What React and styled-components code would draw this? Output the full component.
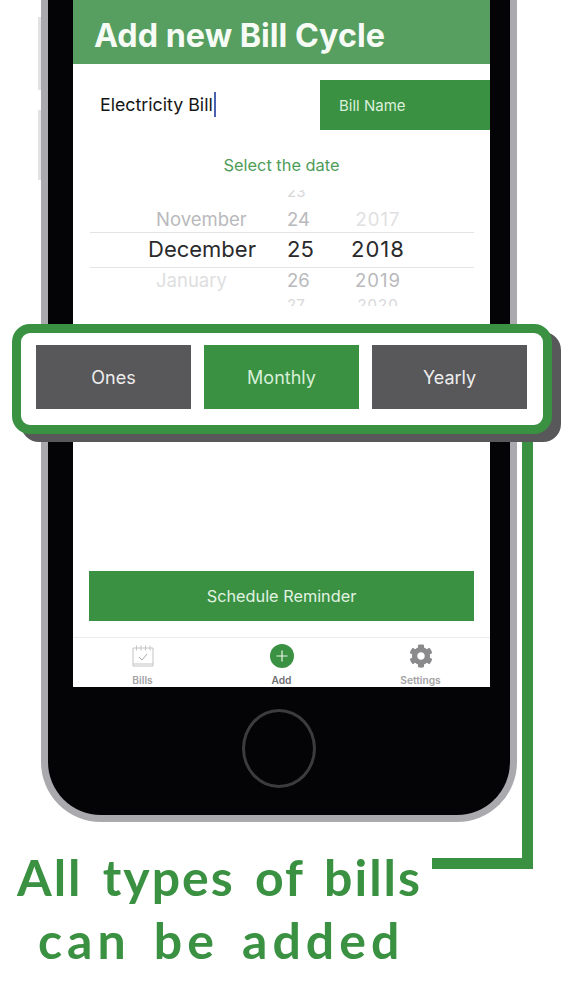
import React from "react";
import styled, { createGlobalStyle } from "styled-components";
import { FaCog } from "react-icons/fa";

const GREEN = "#3a9142";
const GlobalStyle = createGlobalStyle`
  html, body { margin: 0; padding: 0; background: #fff; }
  body { font-family: Inter, "Liberation Sans", sans-serif; }
`;

const Page = styled.div`
  position: relative;
  width: 563px;
  height: 1000px;
  overflow: hidden;
  background: #fff;
`;

const Phone = styled.div`
  position: relative;
  box-sizing: border-box;
  width: 476px;
  margin-left: 41px;
  padding: 0 20px 27px 25px;
  background: #040406;
  border: 7px solid #a9a9ae;
  border-top: 0;
  border-radius: 0 0 60px 60px;
`;

const SideKey = styled.span`
  position: absolute;
  left: -10px;
  top: ${(p) => p.$top}px;
  width: 3px;
  height: ${(p) => p.$h}px;
  background: #e2e2e5;
`;

const Screen = styled.div`
  display: flex;
  flex-direction: column;
  height: 687px;
  background: #fff;
  overflow: hidden;
`;

const Header = styled.div`
  flex: none;
  box-sizing: border-box;
  height: 64px;
  padding: 17px 0 0 21px;
  background: #579f60;
  color: #f6fbf5;
  font-size: 32.3px;
  line-height: 38px;
  font-weight: 700;
`;

const NameRow = styled.div`
  display: flex;
  align-items: stretch;
  height: 50px;
  margin-top: 16px;
`;

const NameInput = styled.div`
  flex: 1;
  display: flex;
  align-items: center;
  padding: 0 0 2px 27px;
  color: #151515;
  font-size: 17.8px;
`;

const Caret = styled.span`
  width: 2px;
  height: 25px;
  margin-left: 1px;
  background: #4a62b0;
`;

const NameLabel = styled.div`
  box-sizing: border-box;
  width: 170px;
  padding-left: 19px;
  display: flex;
  align-items: center;
  background: ${GREEN};
  color: #dcf0dc;
  font-size: 15px;
`;

const DateTitle = styled.div`
  margin-top: 25px;
  text-align: center;
  color: #4f9c5a;
  font-size: 16.4px;
  line-height: 20px;
`;

const Picker = styled.div`
  margin: 15px 16px 0 17px;
  display: flex;
  flex-direction: column;
`;

const PickerRow = styled.div`
  box-sizing: border-box;
  display: grid;
  grid-template-columns: 190px 60px 76px 59px;
  align-items: start;
  height: ${(p) => p.$h}px;
  overflow: hidden;
  color: ${(p) => p.$color};
  font-size: ${(p) => p.$size}px;
  line-height: ${(p) => p.$lh}px;
  ${(p) => p.$active && "border-top: 1.5px solid #e4e4e6; border-bottom: 1.5px solid #e4e4e6;"}
`;

const MonthCell = styled.span`
  padding-left: ${(p) => p.$indent}px;
  color: ${(p) => p.$color || "inherit"};
`;

const DayCell = styled.span`
  padding-left: 7px;
`;

const YearCell = styled.span`
  text-align: center;
  letter-spacing: 1px;
  color: ${(p) => p.$color || "inherit"};
`;

const ScheduleButton = styled.div`
  flex: none;
  margin: auto 16px 0 16px;
  height: 50px;
  display: flex;
  align-items: center;
  justify-content: center;
  background: ${GREEN};
  color: #e2f3e2;
  font-size: 16.3px;
`;

const TabBar = styled.div`
  flex: none;
  margin-top: 16px;
  height: 49px;
  border-top: 1px solid #ececec;
  display: grid;
  grid-template-columns: 139px 139px 139px;
`;

const Tab = styled.div`
  display: flex;
  flex-direction: column;
  align-items: center;
  padding-top: 6px;
  color: ${(p) => p.$color};
  font-size: 10.2px;
  font-weight: 600;
  svg { display: block; }
`;

const TabIcon = styled.div`
  height: 26px;
  margin-bottom: 4px;
  color: #8a8a8c;
`;

const HomeButton = styled.div`
  width: 68px;
  height: 73px;
  margin: 22px 0 0 169px;
  border: 3px solid #3c3c3e;
  border-radius: 50%;
`;

const Caption = styled.div`
  margin-top: 24px;
  color: ${GREEN};
  font-family: Lato, "Liberation Sans", sans-serif;
  font-weight: 700;
  font-size: 50px;
  line-height: 63px;
`;

const CaptionLine = styled.div`
  padding-left: ${(p) => p.$indent}px;
  letter-spacing: ${(p) => p.$spacing}px;
  word-spacing: 6px;
  white-space: nowrap;
`;

const Highlight = styled.div`
  position: absolute;
  left: 12px;
  top: 324px;
  box-sizing: border-box;
  width: 540px;
  height: 110px;
  padding: 12px 16px 16px 15px;
  display: grid;
  grid-template-columns: repeat(3, 155px);
  column-gap: 13px;
  background: #fff;
  border: 9px solid ${GREEN};
  border-radius: 18px;
  box-shadow: 9px 8px 0 #58585a;
`;

const CycleButton = styled.div`
  display: flex;
  align-items: center;
  justify-content: center;
  background: ${(p) => (p.$active ? GREEN : "#58575a")};
  color: ${(p) => (p.$active ? "#d8efd8" : "#eeeeee")};
  font-size: 18px;
`;

const LeaderDown = styled.div`
  position: absolute;
  left: 522px;
  top: 434px;
  width: 11px;
  height: 435px;
  background: ${GREEN};
`;

const LeaderAcross = styled.div`
  position: absolute;
  left: 432px;
  top: 858px;
  width: 101px;
  height: 11px;
  background: ${GREEN};
`;

const CalendarIcon = () => (
  <svg width="24" height="24" viewBox="0 0 24 24" fill="none" stroke="#c4c4c6" strokeWidth="1">
    <path d="M2 4h20v18H2z" />
    <path d="M2 20h20" />
    <path d="M5.5 1.5v5M10 1.5v5M14.5 1.5v5M19 1.5v5" />
    <path d="M8 13l3 3 5-6" stroke="#a9a9ab" />
  </svg>
);

const AddIcon = () => (
  <svg width="24" height="24" viewBox="0 0 24 24">
    <circle cx="12" cy="12" r="12" fill={GREEN} />
    <path d="M12 6.5v11M6.5 12h11" stroke="#e8f5e8" strokeWidth="1.2" />
  </svg>
);

export default function App() {
  return (
    <Page>
      <GlobalStyle />
      <Phone>
        <SideKey $top={17} $h={73} />
        <SideKey $top={110} $h={70} />
        <Screen>
          <Header>Add new Bill Cycle</Header>
          <NameRow>
            <NameInput>
              Electricity Bill
              <Caret />
            </NameInput>
            <NameLabel>Bill Name</NameLabel>
          </NameRow>
          <DateTitle>Select the date</DateTitle>
          <Picker>
            <PickerRow $h={16} $lh={4} $size={15} $color="#d8d8da">
              <MonthCell $indent={66} />
              <DayCell>23</DayCell>
              <YearCell />
            </PickerRow>
            <PickerRow $h={26} $lh={26} $size={18.5} $color="#b9b9bd">
              <MonthCell $indent={66}>November</MonthCell>
              <DayCell>24</DayCell>
              <YearCell $color="#e0e0e2">2017</YearCell>
            </PickerRow>
            <PickerRow $h={36} $lh={33} $size={22} $color="#2a2a2c" $active>
              <MonthCell $indent={58}>December</MonthCell>
              <DayCell>25</DayCell>
              <YearCell>2018</YearCell>
            </PickerRow>
            <PickerRow $h={24} $lh={25} $size={18.5} $color="#b9b9bd">
              <MonthCell $indent={66} $color="#dededf">January</MonthCell>
              <DayCell>26</DayCell>
              <YearCell>2019</YearCell>
            </PickerRow>
            <PickerRow $h={14} $lh={26} $size={15} $color="#d8d8da">
              <MonthCell $indent={66} />
              <DayCell>27</DayCell>
              <YearCell>2020</YearCell>
            </PickerRow>
          </Picker>
          <ScheduleButton>Schedule Reminder</ScheduleButton>
          <TabBar>
            <Tab $color="#a3a3a5">
              <TabIcon><CalendarIcon /></TabIcon>
              Bills
            </Tab>
            <Tab $color="#6e6e70">
              <TabIcon><AddIcon /></TabIcon>
              Add
            </Tab>
            <Tab $color="#a3a3a5">
              <TabIcon><FaCog size={24} /></TabIcon>
              Settings
            </Tab>
          </TabBar>
        </Screen>
        <HomeButton />
      </Phone>
      <Caption>
        <CaptionLine $indent={17} $spacing={2}>All types of bills</CaptionLine>
        <CaptionLine $indent={38} $spacing={5}>can be added</CaptionLine>
      </Caption>
      <LeaderDown />
      <LeaderAcross />
      <Highlight>
        <CycleButton>Ones</CycleButton>
        <CycleButton $active>Monthly</CycleButton>
        <CycleButton>Yearly</CycleButton>
      </Highlight>
    </Page>
  );
}
